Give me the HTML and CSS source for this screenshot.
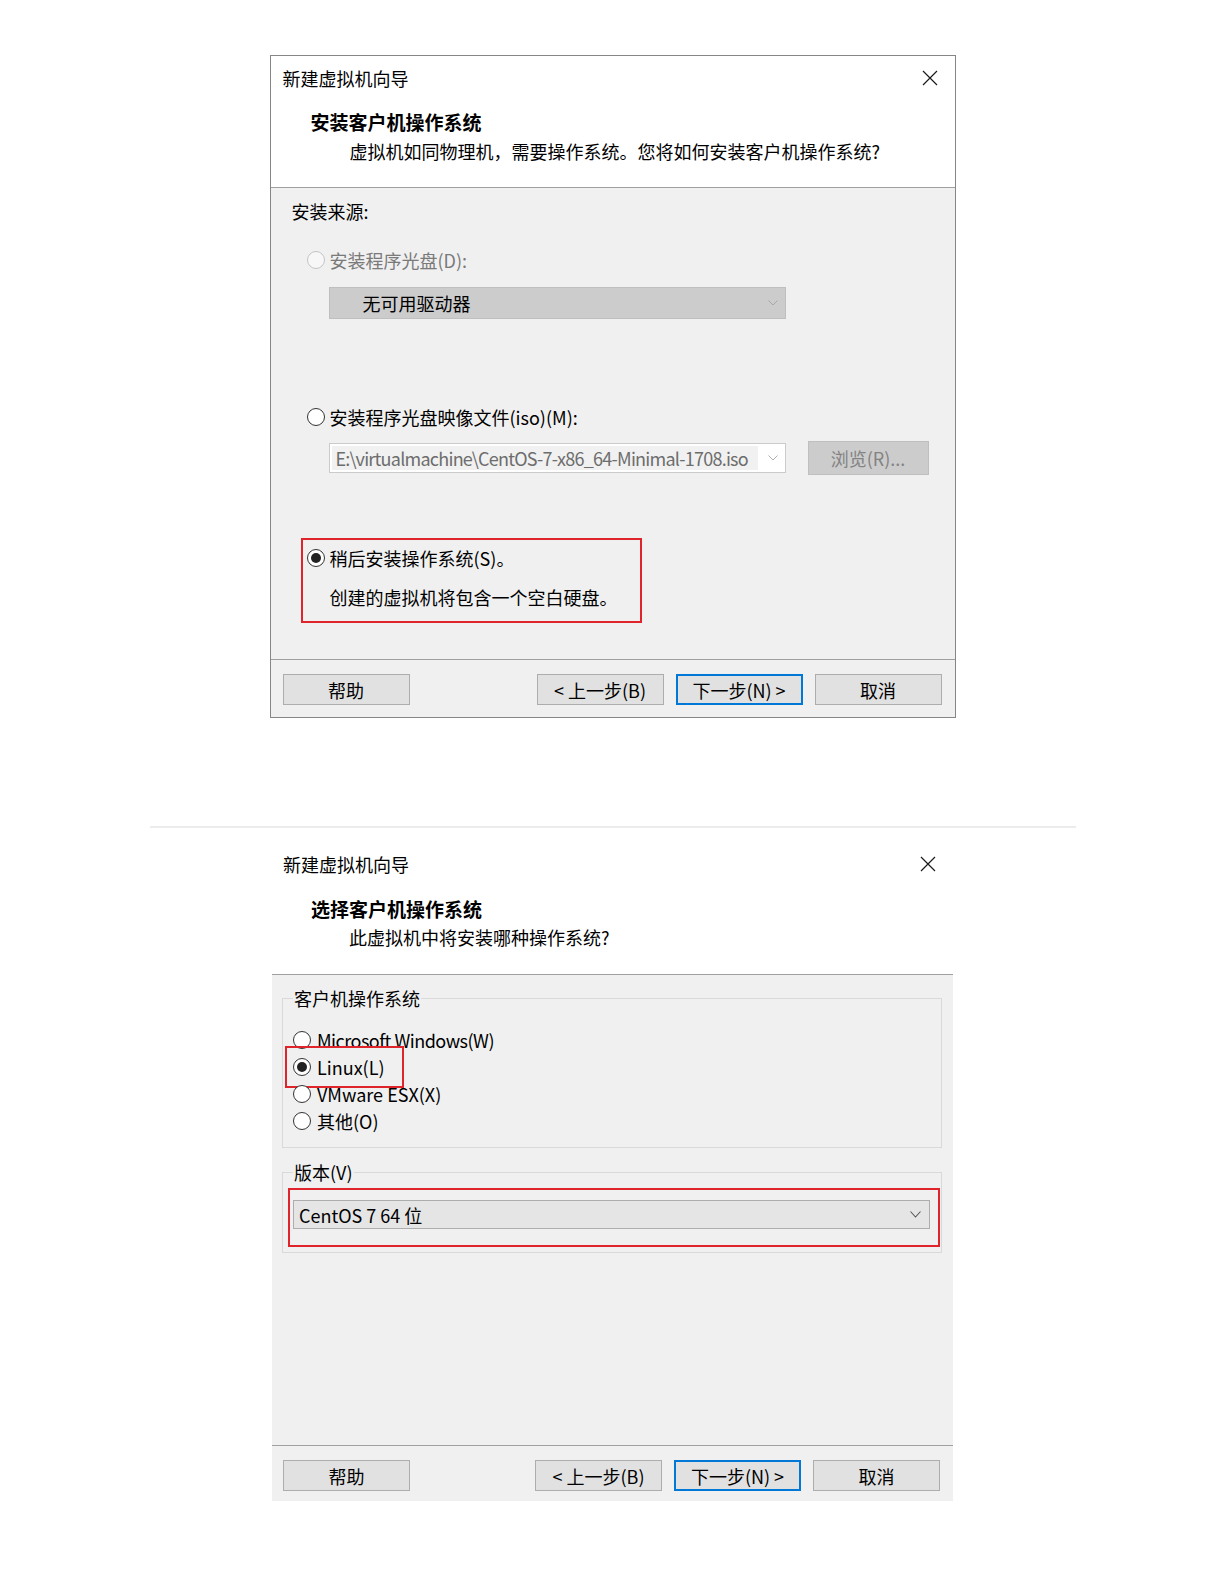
FILE: index.html
```html
<!DOCTYPE html>
<html lang="zh-CN">

<head>
    <meta charset="UTF-8">
    <title>新建虚拟机向导</title>
    <link rel="stylesheet" href="styles.css">
</head>

<body>
    <!-- 第一步: 安装客户机操作系统 -->
    <div class="dialog dialog-boxed">
        <div class="header">
            <div class="titlebar">
                <span>新建虚拟机向导</span>
                <svg class="close" width="16" height="16" viewBox="0 0 16 16">
                    <path d="M1 1 L15 15 M15 1 L1 15" stroke="#1a1a1a" stroke-width="1.2" fill="none" />
                </svg>
            </div>
            <div class="heading">安装客户机操作系统</div>
            <div class="subtitle">虚拟机如同物理机，需要操作系统。您将如何安装客户机操作系统?</div>
        </div>

        <div class="body body-source">
            <div>安装来源:</div>

            <div class="radio-row disabled first-option">
                <span class="radio"></span>
                <span>安装程序光盘(D):</span>
            </div>
            <div class="combo combo-disabled">
                <span>无可用驱动器</span>
                <svg width="10" height="6" viewBox="0 0 10 6">
                    <polyline points="0.5,0.5 5,5 9.5,0.5" stroke="#a8a8a8" stroke-width="1" fill="none" />
                </svg>
            </div>

            <div class="radio-row iso-option">
                <span class="radio"></span>
                <span>安装程序光盘映像文件(iso)(M):</span>
            </div>
            <div class="iso-row">
                <div class="combo combo-path">
                    <span class="path">E:\virtualmachine\CentOS-7-x86_64-Minimal-1708.iso</span>
                    <svg width="10" height="6" viewBox="0 0 10 6">
                        <polyline points="0.5,0.5 5,5 9.5,0.5" stroke="#b0b0b0" stroke-width="1" fill="none" />
                    </svg>
                </div>
                <div class="btn btn-disabled browse">浏览(R)...</div>
            </div>

            <div class="later">
                <div class="radio-row">
                    <span class="radio checked"></span>
                    <span>稍后安装操作系统(S)。</span>
                </div>
                <div class="later-note">创建的虚拟机将包含一个空白硬盘。</div>
            </div>
        </div>

        <div class="footer">
            <div class="btn">帮助</div>
            <div class="nav">
                <div class="btn">&lt; 上一步(B)</div>
                <div class="btn btn-default">下一步(N) &gt;</div>
                <div class="btn">取消</div>
            </div>
        </div>
    </div>

    <hr class="divider">

    <!-- 第二步: 选择客户机操作系统 -->
    <div class="dialog dialog-plain">
        <div class="header">
            <div class="titlebar">
                <span>新建虚拟机向导</span>
                <svg class="close" width="16" height="16" viewBox="0 0 16 16">
                    <path d="M1 1 L15 15 M15 1 L1 15" stroke="#1a1a1a" stroke-width="1.2" fill="none" />
                </svg>
            </div>
            <div class="heading">选择客户机操作系统</div>
            <div class="subtitle">此虚拟机中将安装哪种操作系统?</div>
        </div>

        <div class="body body-os">
            <fieldset class="group">
                <legend>客户机操作系统</legend>
                <div class="radio-row os-row">
                    <span class="radio"></span>
                    <span class="latin">Microsoft Windows(W)</span>
                </div>
                <div class="radio-row os-row">
                    <span class="radio checked"></span>
                    <span>Linux(L)</span>
                    <span class="mark mark-linux"></span>
                </div>
                <div class="radio-row os-row">
                    <span class="radio"></span>
                    <span>VMware ESX(X)</span>
                </div>
                <div class="radio-row os-row">
                    <span class="radio"></span>
                    <span>其他(O)</span>
                </div>
            </fieldset>

            <fieldset class="group group-version">
                <legend>版本(V)</legend>
                <div class="version-mark">
                    <div class="combo combo-version">
                        <span>CentOS 7 64 位</span>
                        <svg width="11" height="7" viewBox="0 0 11 7">
                            <polyline points="0.5,0.5 5.5,6 10.5,0.5" stroke="#555" stroke-width="1.1" fill="none" />
                        </svg>
                    </div>
                </div>
            </fieldset>
        </div>

        <div class="footer footer-os">
            <div class="btn">帮助</div>
            <div class="nav">
                <div class="btn">&lt; 上一步(B)</div>
                <div class="btn btn-default">下一步(N) &gt;</div>
                <div class="btn">取消</div>
            </div>
        </div>
    </div>
</body>

</html>
```

FILE: styles.css
```css
body {
    margin: 0;
    background: #fff;
    font-family: "Noto Sans CJK SC", "Microsoft YaHei", sans-serif;
    font-size: 18px;
    line-height: 24px;
    color: #000;
}

.dialog {
    margin: 0 auto;
}

.dialog-boxed {
    width: 684px;
    margin-top: 55px;
    border: 1px solid #868686;
}

.dialog-plain {
    width: 681px;
}

/* 标题区域 */
.header {
    padding: 10px 0 24px 12px;
    background: #fff;
    border-bottom: 1px solid #a0a0a0;
}

.dialog-plain .header {
    padding: 24px 0 25px 11px;
}

.titlebar {
    display: flex;
    align-items: center;
    justify-content: space-between;
    padding-right: 17px;
}

.heading {
    margin: 20px 0 0 28px;
    font-size: 19px;
    font-weight: bold;
}

.subtitle {
    margin: 5px 0 0 67px;
}

.dialog-plain .heading {
    margin-top: 21px;
}

.dialog-plain .subtitle {
    margin: 4px 0 0 66px;
}

/* 内容区域 */
.body {
    background: #f0f0f0;
}

.body-source {
    padding: 11px 21px 36px;
}

.radio-row {
    display: flex;
    align-items: center;
    gap: 5px;
}

.radio {
    width: 18px;
    height: 18px;
    box-sizing: border-box;
    border: 1px solid #333;
    border-radius: 50%;
    background: #fff;
    display: flex;
    align-items: center;
    justify-content: center;
    flex-shrink: 0;
}

.radio.checked::after {
    content: "";
    width: 10px;
    height: 10px;
    border-radius: 50%;
    background: #222;
}

.latin {
    letter-spacing: -0.5px;
}

.disabled {
    color: #7a7a7a;
}

.disabled .radio {
    border-color: #c4c4c4;
    background: #f7f7f7;
}

.first-option {
    margin: 25px 0 0 15px;
}

.iso-option {
    margin: 86px 0 0 15px;
}

.combo {
    box-sizing: border-box;
    display: flex;
    align-items: center;
    justify-content: space-between;
}

.combo-disabled {
    width: 457px;
    height: 32px;
    margin: 15px 0 0 37px;
    padding: 0 7px 0 33px;
    background: #cccccc;
    border: 1px solid #bfbfbf;
}

.iso-row {
    display: flex;
    align-items: center;
    gap: 22px;
    margin: 12px 0 0 37px;
}

.combo-path {
    width: 457px;
    height: 30px;
    padding: 0 7px 0 2px;
    background: #fff;
    border: 1px solid #cbcbcb;
    overflow: hidden;
}

.path {
    padding: 0 10px 0 4px;
    background: #f1f1f1;
    color: #6d6d6d;
    letter-spacing: -0.75px;
    white-space: nowrap;
}

.later {
    width: 341px;
    box-sizing: border-box;
    margin: 63px 0 0 9px;
    padding: 6px 0 12px 4px;
    border: 2px solid #e0242c;
}

.later-note {
    margin: 15px 0 0 23px;
}

/* 按钮 */
.footer {
    display: flex;
    justify-content: space-between;
    padding: 14px 13px 12px 12px;
    background: #f0f0f0;
    border-top: 1px solid #a0a0a0;
}

.footer-os {
    padding: 14px 13px 10px 11px;
}

.nav {
    display: flex;
    gap: 12px;
}

.btn {
    width: 127px;
    height: 31px;
    box-sizing: border-box;
    display: flex;
    align-items: center;
    justify-content: center;
    background: #e1e1e1;
    border: 1px solid #adadad;
}

.btn-default {
    border: 2px solid #0078d7;
}

.btn-disabled {
    background: #cccccc;
    border-color: #bfbfbf;
    color: #838383;
}

.browse {
    width: 121px;
    height: 34px;
}

.divider {
    width: 926px;
    margin: 108px auto 0;
    border: none;
    border-top: 2px solid #ececec;
}

/* 第二个对话框 */
.body-os {
    padding: 11px 11px 192px 10px;
}

.group {
    margin: 0;
    padding: 16px 0 13px 10px;
    border: 1px solid #d9d9d9;
}

.group legend {
    padding: 0 1px;
    line-height: 24px;
}

.os-row {
    position: relative;
    height: 27px;
    gap: 6px;
}

.mark {
    position: absolute;
    border: 2px solid #e0242c;
}

.mark-linux {
    top: -7px;
    left: -8px;
    width: 115px;
    height: 38px;
}

.group-version {
    margin-top: 12px;
    padding: 4px 0 5px 10px;
}

.version-mark {
    margin: 0 1px 0 -5px;
    padding: 10px 8px 16px 3px;
    border: 2px solid #e0242c;
}

.combo-version {
    height: 29px;
    padding: 0 8px 0 5px;
    background: #e5e5e5;
    border: 1px solid #adadad;
}
```
